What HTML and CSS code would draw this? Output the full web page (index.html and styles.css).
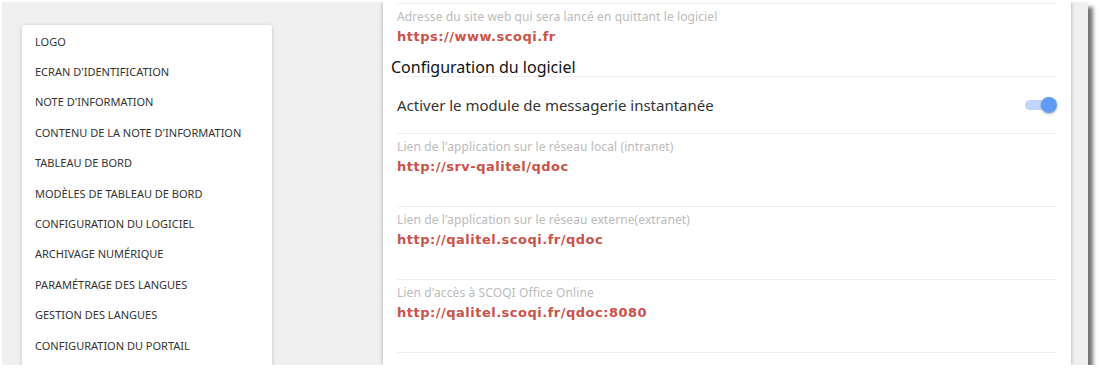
FILE: index.html
```html
<!DOCTYPE html>
<html>
<head>
  <title>Paramètres</title>
  <link rel="stylesheet" href="styles.css">
</head>
<body>
  <div class="window">
    <!-- Menu des paramètres -->
    <div class="menu-card">
      <div class="menu-item">LOGO</div>
      <div class="menu-item">ECRAN D'IDENTIFICATION</div>
      <div class="menu-item">NOTE D'INFORMATION</div>
      <div class="menu-item">CONTENU DE LA NOTE D'INFORMATION</div>
      <div class="menu-item">TABLEAU DE BORD</div>
      <div class="menu-item">MODÈLES DE TABLEAU DE BORD</div>
      <div class="menu-item">CONFIGURATION DU LOGICIEL</div>
      <div class="menu-item">ARCHIVAGE NUMÉRIQUE</div>
      <div class="menu-item">PARAMÉTRAGE DES LANGUES</div>
      <div class="menu-item">GESTION DES LANGUES</div>
      <div class="menu-item">CONFIGURATION DU PORTAIL</div>
    </div>

    <!-- Contenu -->
    <div class="panel">
      <div class="field field-short">
        <div class="field-label">Adresse du site web qui sera lancé en quittant le logiciel</div>
        <div class="field-value">https://www.scoqi.fr</div>
      </div>

      <h3 class="section-title">Configuration du logiciel</h3>

      <div class="toggle-row">
        <span>Activer le module de messagerie instantanée</span>
        <div class="switch"><div class="knob"></div></div>
      </div>

      <div class="field">
        <div class="field-label">Lien de l'application sur le réseau local (intranet)</div>
        <div class="field-value">http://srv-qalitel/qdoc</div>
      </div>

      <div class="field">
        <div class="field-label">Lien de l'application sur le réseau externe(extranet)</div>
        <div class="field-value">http://qalitel.scoqi.fr/qdoc</div>
      </div>

      <div class="field">
        <div class="field-label">Lien d'accès à SCOQI Office Online</div>
        <div class="field-value">http://qalitel.scoqi.fr/qdoc:8080</div>
      </div>

      <div class="field"></div>
    </div>
  </div>
</body>
</html>
```

FILE: styles.css
```css
body {
  margin: 0;
  background-color: #fff;
  font-family: "Noto Sans", "Open Sans", sans-serif;
}

.window {
  display: flex;
  align-items: flex-start;
  width: 1086px;
  height: 363px;
  margin: 2px 0 0 2px;
  background-color: #f0f0f0;
  box-shadow: 5px 5px 4px rgba(0, 0, 0, 0.55);
  overflow: hidden;
}

.menu-card {
  flex-shrink: 0;
  width: 250px;
  margin: 23px 0 0 20px;
  padding: 1px 0 20px;
  background-color: #fff;
  border-radius: 3px;
  box-shadow: 0 1px 4px rgba(0, 0, 0, 0.2);
}

.menu-item {
  height: 30.4px;
  display: flex;
  align-items: center;
  padding-left: 13px;
  font-size: 11px;
  color: #333;
}

.panel {
  flex-shrink: 0;
  align-self: stretch;
  width: 660px;
  margin-left: 111px;
  padding: 1px 14px 0;
  background-color: #fff;
  box-shadow: 0 0 4px rgba(0, 0, 0, 0.3);
}

.field {
  border-top: 1px solid #eee;
  padding: 5px 0 29px;
}

.field-short {
  padding-bottom: 11px;
}

.field-label {
  font-size: 12px;
  line-height: 16px;
  letter-spacing: 0.1px;
  color: #bbb;
}

.field-value {
  margin-top: 2px;
  font-family: "DejaVu Sans", sans-serif;
  font-weight: bold;
  font-size: 13px;
  line-height: 20px;
  letter-spacing: 0.5px;
  color: #cc5249;
}

.section-title {
  margin: 0 0 0 -6px;
  font-size: 16px;
  font-weight: normal;
  line-height: 18px;
  color: #111;
}

.toggle-row {
  display: flex;
  align-items: center;
  justify-content: space-between;
  height: 56px;
  border-top: 1px solid #eee;
  font-size: 15px;
  color: #333;
}

.switch {
  position: relative;
  width: 30px;
  height: 10px;
  margin-right: 2px;
  border-radius: 5px;
  background-color: #c0d6fb;
}

.knob {
  position: absolute;
  right: -2px;
  top: -3px;
  width: 16px;
  height: 16px;
  border-radius: 50%;
  background-color: #5e9bf6;
  box-shadow: 0 1px 3px rgba(0, 0, 0, 0.3);
}
```
